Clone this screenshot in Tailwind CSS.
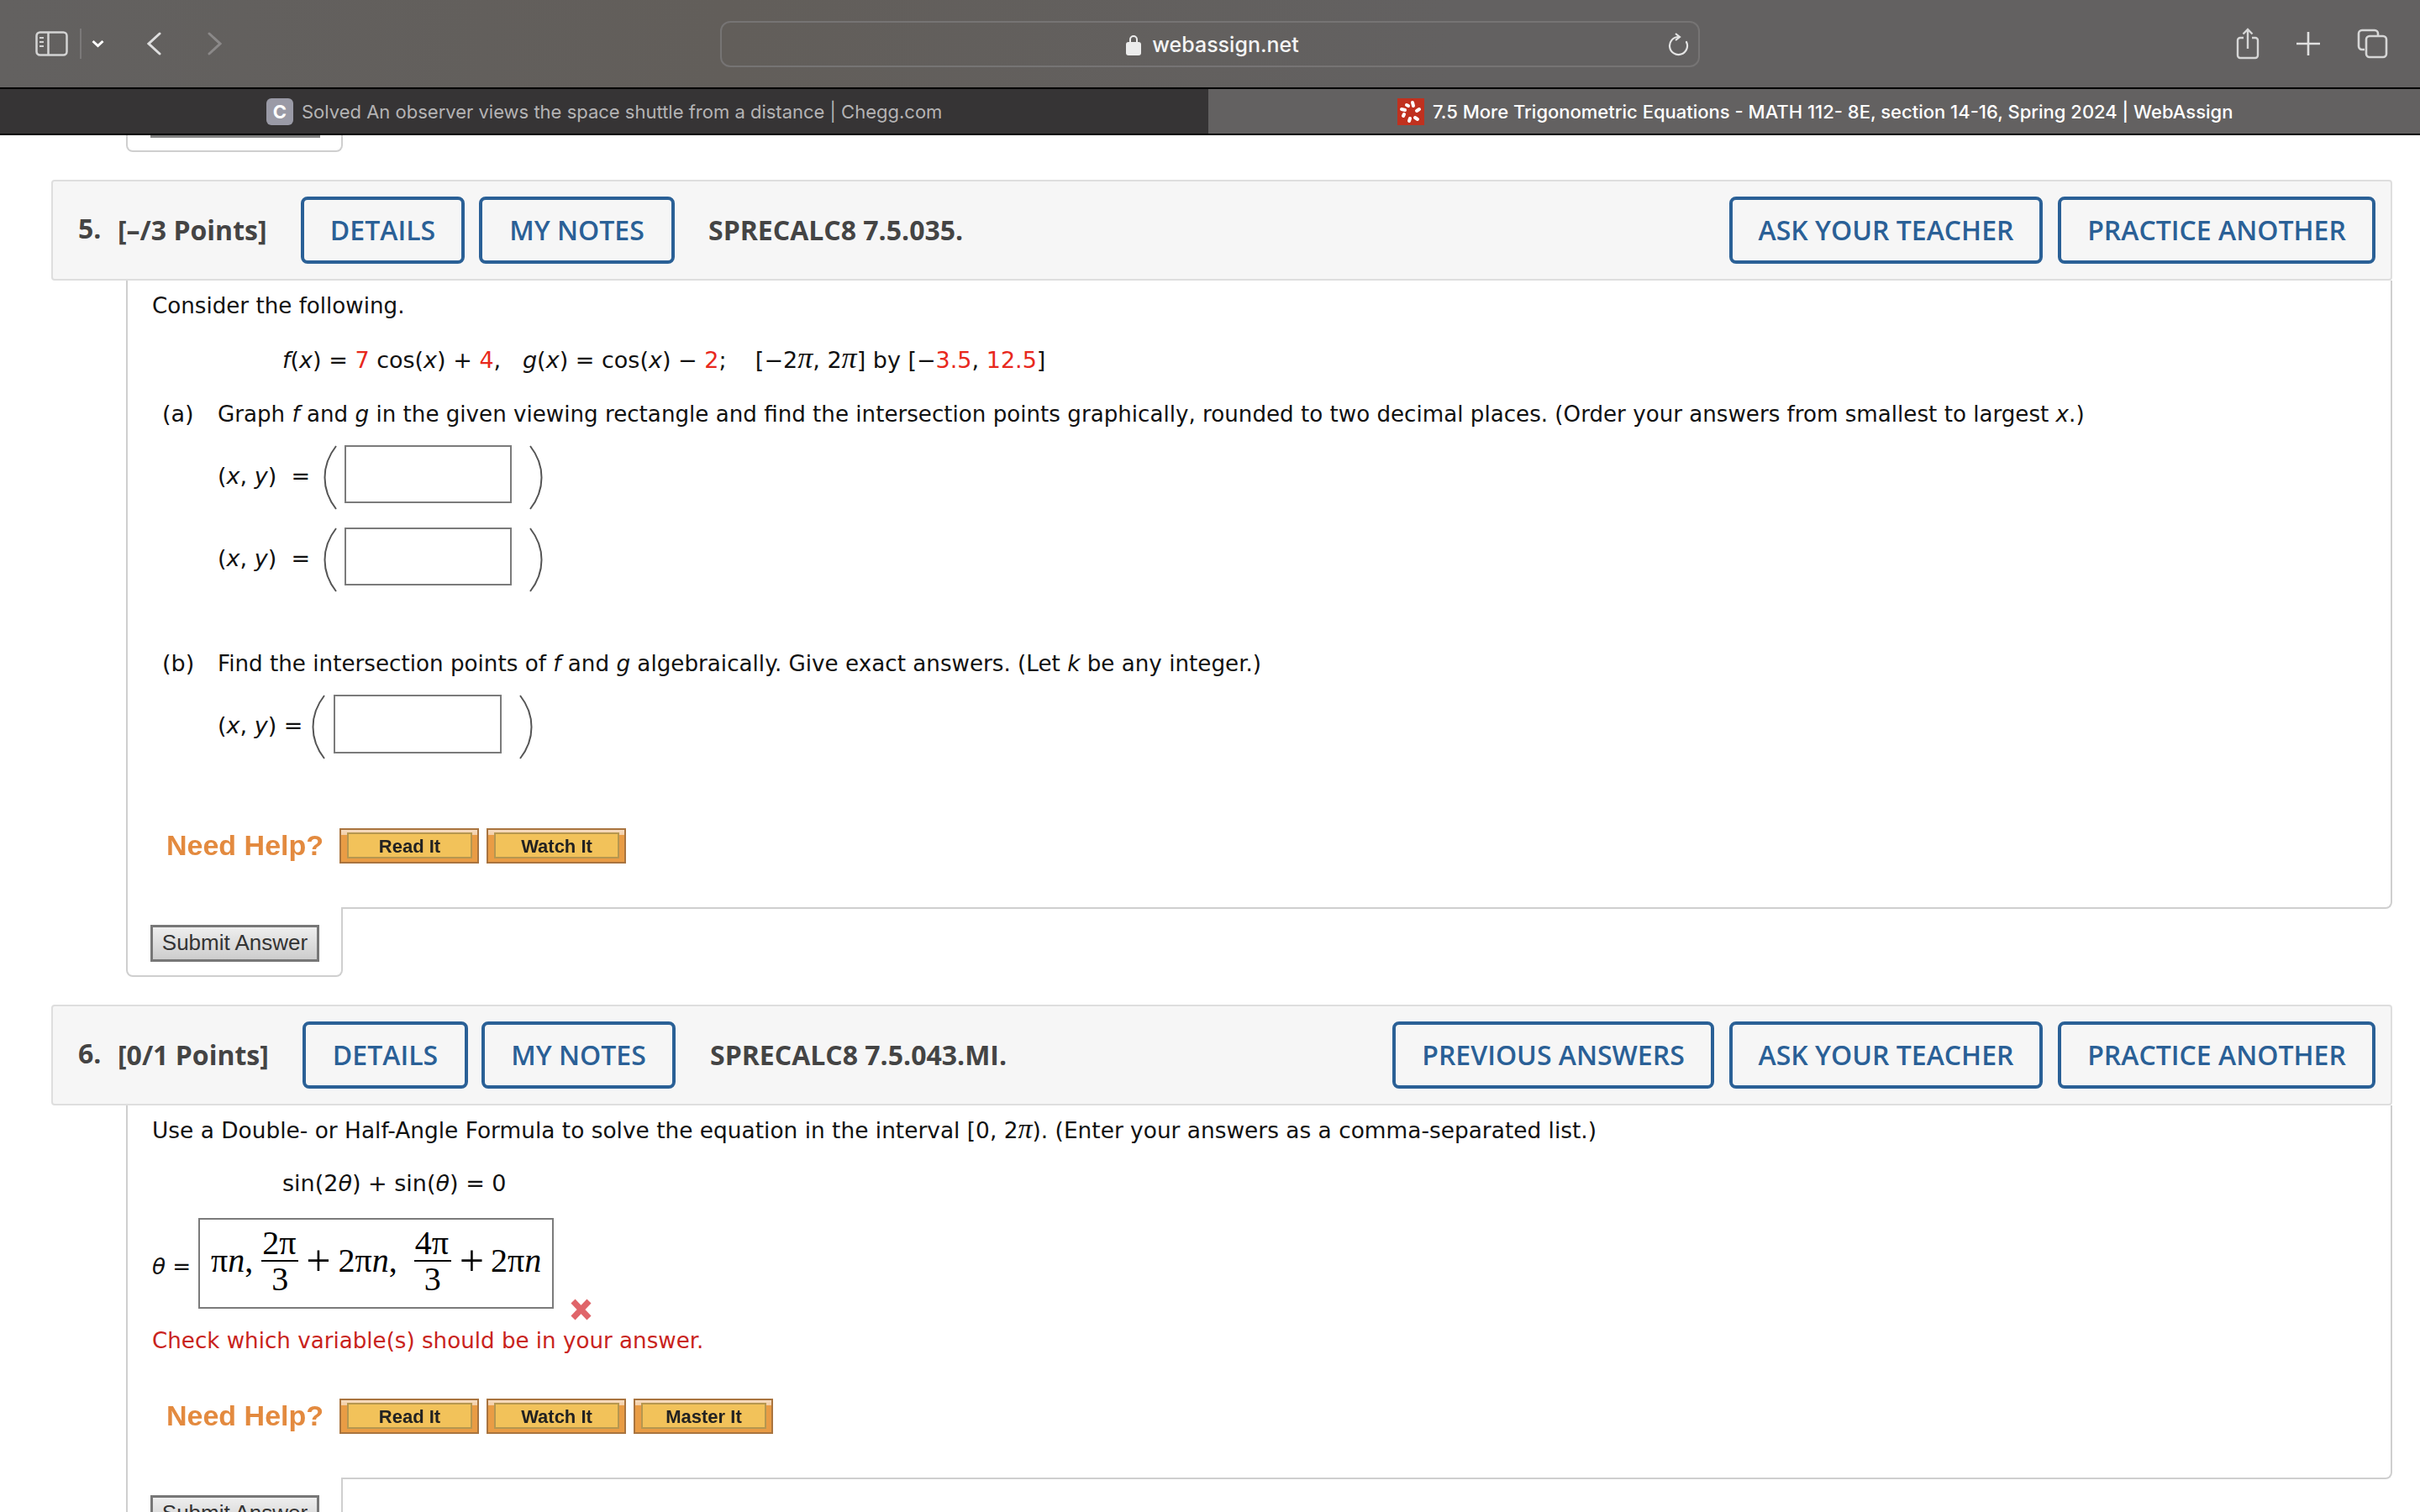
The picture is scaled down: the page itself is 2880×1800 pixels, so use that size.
<!DOCTYPE html>
<html lang="en">
  <head>
    <meta charset="UTF-8" />
    <script src="https://cdn.jsdelivr.net/npm/@tailwindcss/browser@4"></script>
    <title>WebAssign</title>
  </head>
  <body class="h-screen overflow-hidden bg-white font-['DejaVu_Sans',sans-serif] text-[26.15px] leading-[36px] text-[#111]">
    <!-- safari toolbar -->
    <div class="flex h-[104px] items-center bg-[linear-gradient(90deg,#636160_0%,#625e5a_30%,#636161_60%,#636161_100%)]">
      <div class="flex h-full w-[857px] items-center pl-[42px]">
        <svg class="h-[30px] w-[39px]" viewBox="0 0 39 30" fill="none" stroke="#d4d4d4" stroke-width="2.5">
          <rect x="1.5" y="1.5" width="36" height="27" rx="4" />
          <path d="M15.5 1.5v27" />
          <path d="M5 8h5M5 13h5M5 18h5" stroke-width="2" />
        </svg>
        <div class="ml-[14px] h-[36px] w-[2px] bg-[#7b7979]"></div>
        <svg class="ml-[12px] h-[10px] w-[15px]" viewBox="0 0 15 10" fill="none" stroke="#fff" stroke-width="3">
          <path d="M1.5 2l6 5.5 6-5.5" />
        </svg>
        <svg class="ml-[51px] h-[28px] w-[17px]" viewBox="0 0 17 28" fill="none" stroke="#dedede" stroke-width="3" stroke-linecap="round">
          <path d="M15 2L2 14l13 12" />
        </svg>
        <svg class="ml-[55px] h-[28px] w-[17px]" viewBox="0 0 17 28" fill="none" stroke="#8b8989" stroke-width="3" stroke-linecap="round">
          <path d="M2 2l13 12L2 26" />
        </svg>
      </div>
      <div class="relative flex h-[55px] w-[1166px] items-center justify-center rounded-[12px] border-2 border-[#767474] pt-[2px] pl-[5px]">
        <svg class="mr-[12px] h-[26px] w-[20px]" viewBox="0 0 20 26" fill="#ececec">
          <path d="M5 11V7a5 5 0 0 1 10 0v4h-2V7a3 3 0 0 0-6 0v4z" />
          <rect x="1" y="10" width="18" height="16" rx="3" />
        </svg>
        <span class="font-['Inter',sans-serif] text-[25px] font-medium text-[#f4f4f4]">webassign.net</span>
        <svg class="absolute top-[12px] right-[11px] h-[28px] w-[25px]" viewBox="0 0 25 28" fill="none" stroke="#e4e4e4" stroke-width="2.2">
          <path d="M12.500 5a10.500 10.500 0 1 0 9.500 6" stroke-linecap="round" />
          <path d="M9 1l5 4-5 4" />
        </svg>
      </div>
      <div class="flex h-full flex-1 items-center pl-[638px]">
        <svg class="h-[38px] w-[28px]" viewBox="0 0 28 38" fill="none" stroke="#d6d6d6" stroke-width="2.4">
          <path d="M9 12H5a3 3 0 0 0-3 3v18a3 3 0 0 0 3 3h18a3 3 0 0 0 3-3V15a3 3 0 0 0-3-3h-4" />
          <path d="M14 25V2M8.5 7.5L14 2l5.500 5.500" />
        </svg>
        <svg class="ml-[44px] h-[28px] w-[28px]" viewBox="0 0 28 28" fill="none" stroke="#e0e0e0" stroke-width="2.6">
          <path d="M14 0v28M0 14h28" />
        </svg>
        <svg class="ml-[44px] h-[36px] w-[37px]" viewBox="0 0 37 36" fill="none" stroke="#d6d6d6" stroke-width="2.6">
          <path d="M9 25H6a4 4 0 0 1-4-4V6a4 4 0 0 1 4-4h15a4 4 0 0 1 4 4v3" />
          <rect x="11" y="9" width="24" height="25" rx="4" />
        </svg>
      </div>
    </div>

    <!-- tabs -->
    <div class="flex h-[57px] border-y-2 border-black font-['Inter',sans-serif] text-[22px]">
      <div class="flex w-[1438px] items-center bg-[#363435] pl-[317px] text-[#b4b3b4]">
        <span class="flex h-[32px] w-[32px] items-center justify-center rounded-[6px] bg-[#9a9aa6] font-bold text-white">C</span>
        <span class="ml-[10px]">Solved An observer views the space shuttle from a distance | Chegg.com</span>
      </div>
      <div class="flex flex-1 items-center bg-[#636161] pl-[225px] font-medium text-white">
        <svg class="h-[32px] w-[32px]" viewBox="0 0 32 32">
          <rect width="32" height="32" fill="#c0311f" />
          <g stroke="#fff" stroke-width="4" stroke-linecap="round">
            <path d="M18 5l1 4M26 13l-3 2M24 25l-3-2M14 27l1-3M7 21l1-2M5 13l4 1M11 8l2 1" />
          </g>
        </svg>
        <span class="ml-[10px]">7.5 More Trigonometric Equations - MATH 112- 8E, section 14-16, Spring 2024 | WebAssign</span>
      </div>
    </div>

    <!-- tail of question 4 -->
    <div class="ml-[150px] h-[20px] w-[258px] rounded-b-[8px] border-2 border-t-0 border-[#cfcfcf] px-[27px]">
      <div class="h-[3px] w-[202px] bg-[#808080]"></div>
    </div>

    <main class="ml-[61px] w-[2786px]">
      <!-- question 5 -->
      <section class="mt-[33px]">
        <header class="flex h-[120px] items-center rounded-[4px] border-2 border-[#dedede] bg-[#f6f6f6] pr-[18px] pl-[30px] font-['Open_Sans',sans-serif] text-[32px] font-bold text-[#444]">
          <span class="w-[47px] -translate-y-[2px]">5.</span>
          <span class="w-[218px]">[–/3 Points]</span>
          <button class="h-[80px] w-[195px] rounded-[8px] border-4 border-[#2a6096] text-[32px] font-semibold text-[#2a6096]">DETAILS</button>
          <button class="ml-[17px] h-[80px] w-[233px] rounded-[8px] border-4 border-[#2a6096] text-[32px] font-semibold text-[#2a6096]">MY NOTES</button>
          <span class="ml-[40px]">SPRECALC8 7.5.035.</span>
          <span class="flex-1"></span>
          <button class="h-[80px] w-[373px] rounded-[8px] border-4 border-[#2a6096] text-[32px] font-semibold text-[#2a6096]">ASK YOUR TEACHER</button>
          <button class="ml-[18px] h-[80px] w-[378px] rounded-[8px] border-4 border-[#2a6096] text-[32px] font-semibold text-[#2a6096]">PRACTICE ANOTHER</button>
        </header>
        <div class="ml-[89px] rounded-br-[8px] border-x-2 border-b-2 border-[#cfcfcf] pt-[12px] pb-[52px] pl-[29px]">
          <p>Consider the following.</p>
          <p class="mt-[26px] ml-[155px] h-[36px] text-[27px] whitespace-pre"><i>f</i>(<i>x</i>) = <span class="text-[#e8281d]">7</span> cos(<i>x</i>) + <span class="text-[#e8281d]">4</span>,   <i>g</i>(<i>x</i>) = cos(<i>x</i>) − <span class="text-[#e8281d]">2</span>;    [−2<i class="font-['Liberation_Serif',serif] text-[36px] leading-none">π</i>, 2<i class="font-['Liberation_Serif',serif] text-[36px] leading-none">π</i>] by [−<span class="text-[#e8281d]">3.5</span>, <span class="text-[#e8281d]">12.5</span>]</p>
          <div class="mt-[31px] ml-[12px] flex">
            <span class="w-[66px] text-[27px]">(a)</span>
            <p>Graph <i>f</i> and <i>g</i> in the given viewing rectangle and find the intersection points graphically, rounded to two decimal places. (Order your answers from smallest to largest <i>x</i>.)</p>
          </div>
          <div class="mt-[19px] ml-[78px] flex h-[69px] items-center text-[27px]">
            <span class="w-[126px] pt-[5px] whitespace-pre">(<i>x</i>, <i>y</i>)  =</span>
            <svg class="mt-[7px] h-[77px] w-[16px]" viewBox="0 0 16 77" fill="none" stroke="#555" stroke-width="2"><path d="M15 1C-3 24-3 53 15 76" /></svg>
            <input class="ml-[9px] h-[69px] w-[199px] border-2 border-[#7b7b7b] bg-white" />
            <svg class="mt-[7px] ml-[21px] h-[77px] w-[16px]" viewBox="0 0 16 77" fill="none" stroke="#555" stroke-width="2"><path d="M1 1c18 23 18 52 0 75" /></svg>
          </div>
          <div class="mt-[29px] ml-[78px] flex h-[69px] items-center text-[27px]">
            <span class="w-[126px] pt-[5px] whitespace-pre">(<i>x</i>, <i>y</i>)  =</span>
            <svg class="mt-[7px] h-[77px] w-[16px]" viewBox="0 0 16 77" fill="none" stroke="#555" stroke-width="2"><path d="M15 1C-3 24-3 53 15 76" /></svg>
            <input class="ml-[9px] h-[69px] w-[199px] border-2 border-[#7b7b7b] bg-white" />
            <svg class="mt-[7px] ml-[21px] h-[77px] w-[16px]" viewBox="0 0 16 77" fill="none" stroke="#555" stroke-width="2"><path d="M1 1c18 23 18 52 0 75" /></svg>
          </div>
          <div class="mt-[75px] ml-[12px] flex">
            <span class="w-[66px] text-[27px]">(b)</span>
            <p class="text-[26.2px]">Find the intersection points of <i>f</i> and <i>g</i> algebraically. Give exact answers. (Let <i>k</i> be any integer.)</p>
          </div>
          <div class="mt-[19px] ml-[78px] flex h-[70px] items-center text-[27px]">
            <span class="w-[112px] pt-[3px]">(<i>x</i>, <i>y</i>) =</span>
            <svg class="mt-[7px] h-[77px] w-[16px]" viewBox="0 0 16 77" fill="none" stroke="#555" stroke-width="2"><path d="M15 1C-3 24-3 53 15 76" /></svg>
            <input class="ml-[10px] h-[70px] w-[200px] border-2 border-[#7b7b7b] bg-white" />
            <svg class="mt-[7px] ml-[21px] h-[77px] w-[16px]" viewBox="0 0 16 77" fill="none" stroke="#555" stroke-width="2"><path d="M1 1c18 23 18 52 0 75" /></svg>
          </div>
          <div class="mt-[89px] ml-[17px] flex h-[42px] items-center font-['Liberation_Sans',sans-serif]">
            <span class="w-[206px] -translate-y-[1px] text-[34px] font-bold text-[#e38a3f] blur-[0.6px]">Need Help?</span>
            <a class="flex h-[42px] w-[166px] items-center border-2 border-[#a9743f] bg-[linear-gradient(180deg,#f6dcc0_0%,#f3cda4_16%,#e99c45_17%,#e99c45_100%)] pt-[3px] pr-[6px] pb-[4px] pl-[7px]"><span class="flex h-full w-full items-center justify-center border-2 border-[#b6974f] bg-[#f2c25a] pt-[2px] text-[22px] font-bold text-[#222] blur-[0.5px]">Read It</span></a>
            <a class="ml-[9px] flex h-[42px] w-[166px] items-center border-2 border-[#a9743f] bg-[linear-gradient(180deg,#f6dcc0_0%,#f3cda4_16%,#e99c45_17%,#e99c45_100%)] pt-[3px] pr-[6px] pb-[4px] pl-[7px]"><span class="flex h-full w-full items-center justify-center border-2 border-[#b6974f] bg-[#f2c25a] pt-[2px] text-[22px] font-bold text-[#222] blur-[0.5px]">Watch It</span></a>
          </div>
        </div>
        <div class="relative z-10 ml-[89px] -mt-[2px] h-[83px] w-[258px] rounded-b-[8px] border-x-2 border-b-2 border-[#cfcfcf] bg-white pt-[21px] pl-[27px]">
          <button class="h-[44px] w-[201px] border-[3px] border-[#777] bg-[linear-gradient(180deg,#eeeeee,#cdcdcd)] pb-[2px] font-['Liberation_Sans',sans-serif] text-[26px] leading-none text-[#333]">Submit Answer</button>
        </div>
      </section>

      <!-- question 6 -->
      <section class="mt-[33px]">
        <header class="flex h-[120px] items-center rounded-[4px] border-2 border-[#dedede] bg-[#f6f6f6] pr-[18px] pl-[30px] font-['Open_Sans',sans-serif] text-[32px] font-bold text-[#444]">
          <span class="w-[47px] -translate-y-[2px]">6.</span>
          <span class="w-[220px]">[0/1 Points]</span>
          <button class="h-[80px] w-[197px] rounded-[8px] border-4 border-[#2a6096] text-[32px] font-semibold text-[#2a6096]">DETAILS</button>
          <button class="ml-[16px] h-[80px] w-[231px] rounded-[8px] border-4 border-[#2a6096] text-[32px] font-semibold text-[#2a6096]">MY NOTES</button>
          <span class="ml-[41px]">SPRECALC8 7.5.043.MI.</span>
          <span class="flex-1"></span>
          <button class="h-[80px] w-[383px] rounded-[8px] border-4 border-[#2a6096] text-[32px] font-semibold text-[#2a6096]">PREVIOUS ANSWERS</button>
          <button class="ml-[18px] h-[80px] w-[373px] rounded-[8px] border-4 border-[#2a6096] text-[32px] font-semibold text-[#2a6096]">ASK YOUR TEACHER</button>
          <button class="ml-[18px] h-[80px] w-[378px] rounded-[8px] border-4 border-[#2a6096] text-[32px] font-semibold text-[#2a6096]">PRACTICE ANOTHER</button>
        </header>
        <div class="ml-[89px] rounded-br-[8px] border-x-2 border-b-2 border-[#cfcfcf] pt-[11px] pb-[52px] pl-[29px]">
          <p class="h-[36px] text-[26.4px]">Use a Double- or Half-Angle Formula to solve the equation in the interval [0, 2<i class="font-['Liberation_Serif',serif] text-[34px] leading-none">π</i>). (Enter your answers as a comma-separated list.)</p>
          <p class="mt-[28px] ml-[155px] text-[27px]">sin(2<i>θ</i>) + sin(<i>θ</i>) = 0</p>
          <div class="mt-[23px] flex items-start">
            <span class="flex h-[108px] w-[55px] items-center pt-[8px]"><i>θ</i>&nbsp;=</span>
            <div class="flex h-[108px] w-[423px] items-center border-2 border-[#7b7b7b] pb-[6px] pl-[13px] font-['Liberation_Serif',serif] text-[40px] leading-none text-black">
              <span>π<i>n</i>,</span>
              <span class="ml-[10px] flex w-[44px] flex-col items-center"><span class="w-full border-b-2 border-black pl-[1px]">2π</span><span class="pt-[1px]">3</span></span>
              <span class="ml-[9px] text-[52px]">+</span>
              <span class="ml-[9px]">2π<i>n</i>,</span>
              <span class="ml-[20px] flex w-[44px] flex-col items-center"><span class="w-full border-b-2 border-black pl-[1px]">4π</span><span class="pt-[1px]">3</span></span>
              <span class="ml-[10px] text-[52px]">+</span>
              <span class="ml-[8px]">2π<i>n</i></span>
            </div>
            <svg class="mt-[96px] ml-[19px] h-[26px] w-[27px]" viewBox="0 0 27 26" fill="none" stroke="#e0656a" stroke-width="7"><path d="M4 3l19 20M23 3L4 23" /></svg>
          </div>
          <p class="mt-[6px] text-[#c9231c]">Check which variable(s) should be in your answer.</p>
          <div class="mt-[51px] ml-[17px] flex h-[42px] items-center font-['Liberation_Sans',sans-serif]">
            <span class="w-[206px] -translate-y-[1px] text-[34px] font-bold text-[#e38a3f] blur-[0.6px]">Need Help?</span>
            <a class="flex h-[42px] w-[166px] items-center border-2 border-[#a9743f] bg-[linear-gradient(180deg,#f6dcc0_0%,#f3cda4_16%,#e99c45_17%,#e99c45_100%)] pt-[3px] pr-[6px] pb-[4px] pl-[7px]"><span class="flex h-full w-full items-center justify-center border-2 border-[#b6974f] bg-[#f2c25a] pt-[2px] text-[22px] font-bold text-[#222] blur-[0.5px]">Read It</span></a>
            <a class="ml-[9px] flex h-[42px] w-[166px] items-center border-2 border-[#a9743f] bg-[linear-gradient(180deg,#f6dcc0_0%,#f3cda4_16%,#e99c45_17%,#e99c45_100%)] pt-[3px] pr-[6px] pb-[4px] pl-[7px]"><span class="flex h-full w-full items-center justify-center border-2 border-[#b6974f] bg-[#f2c25a] pt-[2px] text-[22px] font-bold text-[#222] blur-[0.5px]">Watch It</span></a>
            <a class="ml-[9px] flex h-[42px] w-[166px] items-center border-2 border-[#a9743f] bg-[linear-gradient(180deg,#f6dcc0_0%,#f3cda4_16%,#e99c45_17%,#e99c45_100%)] pt-[3px] pr-[6px] pb-[4px] pl-[7px]"><span class="flex h-full w-full items-center justify-center border-2 border-[#b6974f] bg-[#f2c25a] pt-[2px] text-[22px] font-bold text-[#222] blur-[0.5px]">Master It</span></a>
          </div>
        </div>
        <div class="relative z-10 ml-[89px] -mt-[2px] h-[83px] w-[258px] rounded-b-[8px] border-x-2 border-b-2 border-[#cfcfcf] bg-white pt-[21px] pl-[27px]">
          <button class="h-[44px] w-[201px] border-[3px] border-[#777] bg-[linear-gradient(180deg,#eeeeee,#cdcdcd)] pb-[2px] font-['Liberation_Sans',sans-serif] text-[26px] leading-none text-[#333]">Submit Answer</button>
        </div>
      </section>
    </main>
  </body>
</html>
